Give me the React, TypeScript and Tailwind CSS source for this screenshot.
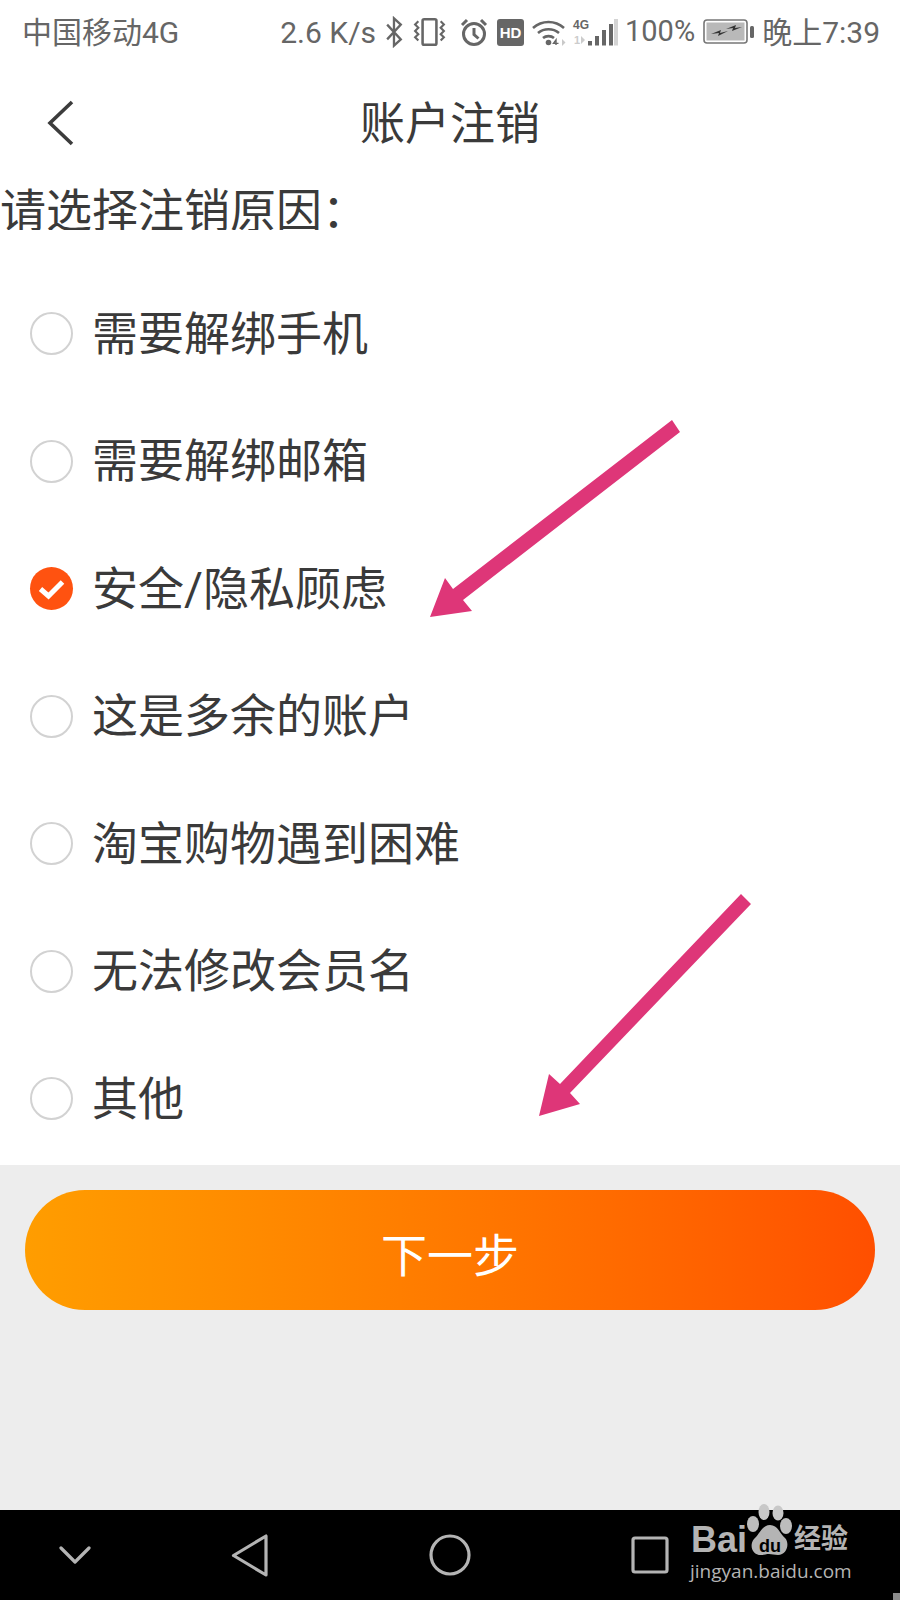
const reasons = [
  "需要解绑手机",
  "需要解绑邮箱",
  "安全/隐私顾虑",
  "这是多余的账户",
  "淘宝购物遇到困难",
  "无法修改会员名",
  "其他",
];

const cjk = "font-['Roboto','Noto_Sans_CJK_SC',sans-serif]";

function StatusIcons() {
  return (
    <>
      {/* bluetooth */}
      <svg width="21" height="32" viewBox="0 0 20 30" className="ml-[8px]" fill="none" stroke="#666" strokeWidth="2.2">
        <path d="M3 8l13 14-6.5 6V2L16 8 3 22" />
      </svg>
      {/* vibrate */}
      <svg width="33" height="32" viewBox="0 0 31 30" className="ml-[8px]" fill="none" stroke="#666" strokeWidth="2">
        <rect x="9" y="3" width="13" height="24" rx="1.5" strokeWidth="2.4" />
        <path d="M5 5l-3 3 3 3-3 3 3 3-3 3 3 3M26 5l3 3-3 3 3 3-3 3 3 3-3 3" />
      </svg>
      {/* alarm */}
      <svg width="28" height="28" viewBox="0 0 28 28" className="ml-[14px]" fill="none" stroke="#666" strokeWidth="3">
        <circle cx="14" cy="16" r="10.5" />
        <path d="M14 10v6.5l4.5 4M2 7l5-5M26 7l-5-5" />
      </svg>
      {/* hd */}
      <div className="ml-[9px] flex h-[27px] w-[27px] items-center justify-center rounded-[3px] bg-[#666] font-['Liberation_Sans',sans-serif] text-[15px] leading-none font-bold text-white">
        HD
      </div>
      {/* wifi */}
      <svg width="34" height="27" viewBox="0 0 34 27" className="ml-[8px]" fill="none" stroke="#666" strokeWidth="2.6">
        <path d="M1 9c9-8 22-8 31 0M6 14c6-5 15-5 21 0M11 19c3-2.5 8-2.5 11 0" />
        <circle cx="16.5" cy="23.5" r="2.8" fill="#666" stroke="none" />
        <path d="M30 20l3.5 3.5-3.5 3.5z" stroke="none" fill="#c9c9c9" />
        <path d="M24 26v-5l-2.5 3.4h5" strokeWidth="1.4" />
      </svg>
      {/* 4g signal */}
      <div className="relative ml-[7px] h-[30px] w-[45px]">
        <span className="absolute top-[1px] left-0 font-['Liberation_Sans',sans-serif] text-[12px] leading-[14px] font-bold text-[#666]">
          4G
        </span>
        <span className="absolute top-[16px] left-[1px] font-['Liberation_Sans',sans-serif] text-[11px] leading-[14px] font-bold text-[#ccc]">
          1
        </span>
        <svg width="45" height="30" viewBox="0 0 45 30" className="absolute top-0 left-0" fill="#666">
          <path d="M8 19l4 4-4 4z" fill="#ccc" />
          <rect x="15" y="24" width="4" height="4.5" />
          <rect x="22" y="19" width="4" height="9.5" />
          <rect x="29" y="13" width="4" height="15.5" />
          <rect x="36" y="7" width="4" height="21.5" />
          <rect x="41" y="2" width="4" height="26.5" fill="#d4d4d4" />
        </svg>
      </div>
    </>
  );
}

function BatteryIcon() {
  return (
    <svg width="52" height="26" viewBox="0 0 52 26" className="ml-[8px]" fill="none">
      <rect x="1" y="1" width="43" height="23" rx="3" stroke="#777" strokeWidth="1.6" />
      <rect x="3.5" y="3.5" width="38" height="18" fill="#b9b9b9" />
      <path d="M8 15l10-4-1 3 8-2-10 5 1-3zM23 10l10-4-1 3 7-1-10 4 1-3z" fill="#333" />
      <rect x="47" y="7" width="4" height="12" rx="1.5" fill="#666" />
    </svg>
  );
}

function RadioMark({ checked }: { checked: boolean }) {
  if (checked) {
    return (
      <div className="flex h-[43px] w-[43px] items-center justify-center rounded-full bg-[#ff5210]">
        <svg width="27" height="22" viewBox="0 0 27 22" fill="none" stroke="#fff" strokeWidth="5">
          <path d="M2.5 11l8 7L24.5 4" />
        </svg>
      </div>
    );
  }
  return <div className="h-[43px] w-[43px] rounded-full border-2 border-[#d2d2d2]" />;
}

function BaiduMark() {
  return (
    <div className="absolute top-[1503px] left-[688px] h-[80px] w-[170px] text-[#b4b4b4]">
      <span className="absolute top-[17px] left-[3px] font-['Liberation_Sans',sans-serif] text-[36px] leading-[40px] font-bold">
        Bai
      </span>
      <svg width="60" height="58" viewBox="0 0 60 58" className="absolute top-0 left-[54px]">
        <ellipse cx="11" cy="21" rx="6" ry="8" fill="#bdbdbd" />
        <ellipse cx="22" cy="9" rx="5.5" ry="8" fill="#c8c8c8" />
        <ellipse cx="36" cy="10" rx="5.5" ry="7.5" fill="#c8c8c8" />
        <ellipse cx="44" cy="23" rx="6" ry="8" fill="#bdbdbd" />
        <path d="M28 22c8 0 10 9 15 13 5 5 2 17-7 17-4 0-6-1-9-1-3 0-5 1-8 1-9 0-12-10-7-16 5-4 8-14 16-14z" fill="#b4b4b4" />
        <text x="28" y="49" textAnchor="middle" fontFamily="Liberation Sans" fontSize="18" fontWeight="700" fill="#000">
          du
        </text>
      </svg>
      <span className={`absolute top-[18px] left-[106px] ${cjk} text-[27px] leading-[36px] font-bold`}>经验</span>
      <span className="absolute top-[55px] left-[2px] font-['Open_Sans',sans-serif] text-[19px] leading-[26px]">
        jingyan.baidu.com
      </span>
    </div>
  );
}

export default function App() {
  return (
    <div className={`relative flex h-[1600px] w-[900px] flex-col overflow-hidden bg-white ${cjk}`}>
      {/* Status bar */}
      <div className="flex h-[62px] items-center justify-between pt-[2px] pr-[20px] pl-[22px] text-[30px] text-[#666]">
        <span>中国移动4G</span>
        <div className="flex items-center">
          <span>2.6 K/s</span>
          <StatusIcons />
          <span className="ml-[7px] text-[29px]">100%</span>
          <BatteryIcon />
          <span className="ml-[7px]">晚上7:39</span>
        </div>
      </div>

      {/* Header */}
      <div className="relative flex h-[120px] items-center justify-center pt-[4px]">
        <svg width="28" height="46" viewBox="0 0 28 46" className="absolute top-[38px] left-[47px]" fill="none" stroke="#3c3c3c" strokeWidth="3.6">
          <path d="M25 2L3 23l22 21" />
        </svg>
        <h1 className="text-[45px] leading-none font-normal text-[#3a3a3a]">账户注销</h1>
      </div>

      {/* Form */}
      <h2 className="h-[48px] overflow-hidden text-[46px] leading-[58px] font-normal text-[#3a3a3a]">
        请选择注销原因：
      </h2>
      <ul className="mt-[40px] pb-[2px]">
        {reasons.map((reason, i) => (
          <li key={reason} className="flex h-[127.5px] items-center pl-[30px]">
            <RadioMark checked={i === 2} />
            <span className="ml-[19px] text-[46px] leading-none text-[#3a3a3a]">{reason}</span>
          </li>
        ))}
      </ul>

      {/* Footer area */}
      <div className="flex-1 bg-[#ededed] px-[25px] pt-[25px]">
        <button className="flex h-[120px] w-full items-center justify-center rounded-[60px] bg-gradient-to-r from-[#ff9d00] to-[#ff4f00] pt-[14px] text-[46px] text-white">
          下一步
        </button>
      </div>

      {/* Nav bar */}
      <div className="flex h-[90px] items-center bg-black">
        <div className="grid w-full grid-cols-[150px_200px_200px_200px_150px] items-center justify-items-center">
          <svg width="32" height="18" viewBox="0 0 32 18" fill="none" stroke="#b4b4b4" strokeWidth="3.2" strokeLinecap="round" strokeLinejoin="round">
            <path d="M2 2L16 16 30 2" />
          </svg>
          <svg width="38" height="43" viewBox="0 0 38 43" fill="none" stroke="#b4b4b4" strokeWidth="3.2" strokeLinecap="round" strokeLinejoin="round">
            <path d="M2.5 21.5L35 2v39z" />
          </svg>
          <svg width="42" height="42" viewBox="0 0 42 42" fill="none" stroke="#b4b4b4" strokeWidth="3.2">
            <circle cx="21" cy="21" r="19" />
          </svg>
          <svg width="38" height="38" viewBox="0 0 38 38" fill="none" stroke="#b4b4b4" strokeWidth="3.2" strokeLinejoin="round">
            <rect x="2" y="2" width="34" height="34" rx="2" />
          </svg>
          <div />
        </div>
      </div>

      {/* Annotation arrows */}
      <svg width="262" height="208" viewBox="0 0 262 208" className="absolute top-[415px] left-[425px]" fill="#de3678">
        <path d="M247 5L255 17 38 185 47 196 5 202 20 163 28 174z" />
      </svg>
      <svg width="222" height="232" viewBox="0 0 222 232" className="absolute top-[890px] left-[535px]" fill="#de3678">
        <path d="M206 4L216 14 35 203 45 214 4 226 14 184 25 194z" />
      </svg>

      <BaiduMark />
      <div className="absolute right-0 bottom-0 h-[7px] w-[7px] bg-[#8a8a8a]" />
    </div>
  );
}
